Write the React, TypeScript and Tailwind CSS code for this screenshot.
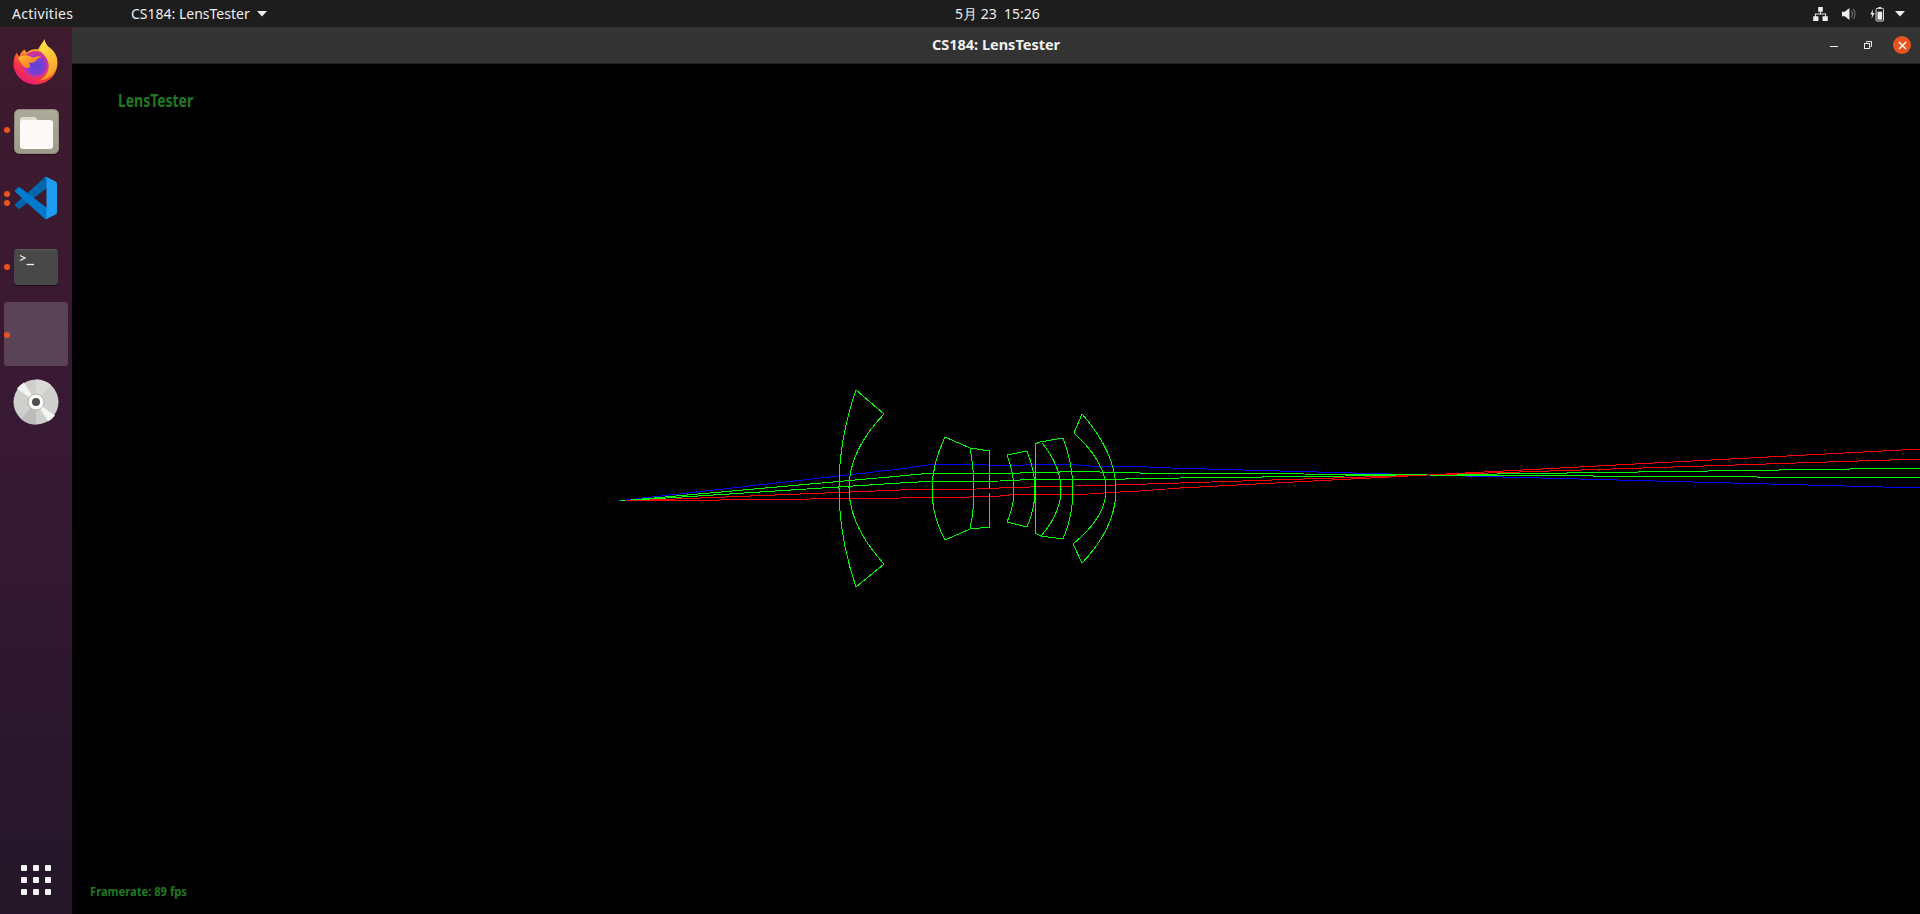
const UI = "font-['Noto_Sans','Open_Sans',sans-serif]";

function arc(a: [number, number], b: [number, number], c: [number, number]) {
  const cx = 2 * b[0] - (a[0] + c[0]) / 2;
  const cy = 2 * b[1] - (a[1] + c[1]) / 2;
  return `M${a[0]} ${a[1]}Q${cx} ${cy} ${c[0]} ${c[1]}`;
}

const lensPaths = [
  arc([856, 390], [839, 488], [856, 587]),
  arc([884, 414], [849, 488], [884, 564]),
  "M856 390L884 414M856 587L884 564",
  arc([945, 437], [932, 490], [945, 540]),
  arc([970, 448], [974, 490], [970, 529]),
  "M945 437L970 448M945 540L970 529",
  "M970 448L990 451M970 529L990 527",
  arc([990, 451], [989, 490], [990, 527]),
  "M1007 455L1027 451M1007 522L1027 527",
  arc([1007, 455], [1014, 490], [1007, 522]),
  arc([1027, 451], [1035, 490], [1027, 527]),
  "M1035 444L1035 533M1035 444L1040 442L1063 438M1035 533L1041 536L1063 539",
  arc([1063, 438], [1073, 490], [1063, 539]),
  arc([1042, 443], [1061, 490], [1041, 536]),
  arc([1082, 414], [1116, 490], [1082, 563]),
  arc([1074, 433], [1106, 490], [1073, 544]),
  "M1074 433L1082 414M1073 544L1082 563",
];

const rays: { color: string; pts: number[][] }[] = [
  {
    color: "#0000ff",
    pts: [[617, 501], [900, 469], [935, 464], [960, 464], [1000, 465.5], [1015, 466], [1030, 464.5], [1070, 464.5], [1090, 466], [1110, 467], [1125, 466], [1170, 468], [1427, 475], [1920, 488]],
  },
  {
    color: "#00ff00",
    pts: [[620, 501], [900, 476], [926, 473.5], [1020, 473], [1080, 471.5], [1140, 473], [1180, 473], [1427, 475], [1920, 478]],
  },
  {
    color: "#00ff00",
    pts: [[620, 501], [900, 483], [927, 481.5], [1000, 481], [1030, 479.5], [1125, 479], [1180, 478], [1427, 475], [1920, 468]],
  },
  {
    color: "#ff0000",
    pts: [[625, 501], [900, 490], [930, 489.5], [977, 489], [1010, 487.5], [1050, 486.5], [1100, 485.5], [1130, 484.5], [1180, 483], [1427, 475], [1920, 459]],
  },
  {
    color: "#ff0000",
    pts: [[630, 501], [900, 498], [940, 497], [970, 497], [1000, 496], [1015, 494.5], [1090, 494], [1110, 492.5], [1140, 491], [1180, 488], [1427, 475], [1920, 449]],
  },
];

function LensDiagram() {
  return (
    <svg className="absolute left-0 top-0" width="1848" height="850" viewBox="72 64 1848 850" shapeRendering="crispEdges" fill="none">
      {rays.map((r, i) => (
        <polyline key={i} points={r.pts.map((p) => p.join(",")).join(" ")} stroke={r.color} strokeWidth="1" />
      ))}
      {lensPaths.map((d, i) => (
        <path key={i} d={d} stroke="#00ff00" strokeWidth="1" />
      ))}
    </svg>
  );
}

function Firefox() {
  return (
    <svg width="48" height="48" viewBox="0 0 48 48">
      <defs>
        <linearGradient id="ff1" x1="0.8" y1="0.05" x2="0.25" y2="1">
          <stop offset="0" stopColor="#ffe23e" />
          <stop offset="0.4" stopColor="#ff9a24" />
          <stop offset="0.72" stopColor="#f5363f" />
          <stop offset="1" stopColor="#e8167e" />
        </linearGradient>
        <radialGradient id="ff2" cx="0.5" cy="0.55" r="0.6">
          <stop offset="0" stopColor="#5b45d6" />
          <stop offset="0.65" stopColor="#7a3fd2" />
          <stop offset="1" stopColor="#c0309a" />
        </radialGradient>
        <linearGradient id="ff3" x1="0" y1="0" x2="1" y2="0.7">
          <stop offset="0" stopColor="#ffc02e" />
          <stop offset="1" stopColor="#ff6a24" />
        </linearGradient>
        <linearGradient id="ff4" x1="0.3" y1="0" x2="0.6" y2="1">
          <stop offset="0" stopColor="#ffe648" />
          <stop offset="1" stopColor="#ff9a24" />
        </linearGradient>
      </defs>
      <path d="M32.5 1C33 6 35.5 8 38.5 10.5C42 13.5 45.5 18 45.5 24.5C45.5 37 35.5 46.5 23.5 46.5C11.5 46.5 1.5 37 1.5 25.5C1.5 21.5 2.5 17.5 5 14.5C5.5 16.5 6.5 18 7.5 18.5C8 16 10 12.5 12.5 11.5C13 12.5 14 14 15 14.5C19 10.5 23 11 26 11.5C29 6 32 3 32.5 1Z" fill="url(#ff1)" />
      <circle cx="23.5" cy="26.5" r="13.5" fill="#d0319a" />
      <circle cx="24" cy="27" r="10.5" fill="url(#ff2)" />
      <path d="M6 20C9.5 17 14.5 16.5 17.5 18C19 18.8 21 20 23 19C25 18 28 17.5 30 19.5C27 19 25.5 20.5 24.5 22C22.5 25 19.5 25 16.5 24.5C19.5 28 18 31.5 13.5 29.5C10 28 8.5 23.5 6 20Z" fill="url(#ff3)" />
      <path d="M32.5 1C33 6 35.5 8 38.5 10.5C42 13.5 45 18 45 24C45 33 38 41.5 27.5 42.5C35.5 38.5 38.5 31 36 23.5C34.5 19 31 15.5 27.5 12.5C29.5 7.5 32 3.5 32.5 1Z" fill="url(#ff4)" />
    </svg>
  );
}

function Files() {
  return (
    <div className="relative mt-[2px] h-[45px] w-[45px] rounded-[5px] border border-[#8d8a7b] bg-gradient-to-b from-[#aeaa99] to-[#a09c8b] shadow-[0_1px_1px_rgba(0,0,0,0.4)]">
      <div className="absolute left-[5px] top-[7px] h-[8px] w-[17px] rounded-t-[3px] bg-[#dedbd0]" />
      <div className="absolute left-[5px] top-[10px] h-[29px] w-[33px] rounded-[3px] bg-[#fbfaf8]" />
    </div>
  );
}

function VSCode() {
  return (
    <svg width="42" height="42" viewBox="0 0 100 100">
      <path d="M96.46 10.8L75.86.9c-2.39-1.15-5.24-.66-7.11 1.21L1.3 63.6c-1.81 1.65-1.81 4.5.01 6.15l5.51 5c1.49 1.35 3.72 1.45 5.32.24l81.2-61.6c2.72-2.07 6.64-.13 6.64 3.28v-.24c0-2.39-1.37-4.57-3.53-5.6Z" fill="#0065a9" />
      <path d="M96.46 89.2L75.86 99.1c-2.39 1.15-5.24.66-7.11-1.21L1.3 36.4c-1.81-1.65-1.81-4.5.01-6.15l5.51-5c1.49-1.35 3.72-1.45 5.32-.24l81.2 61.6c2.72 2.07 6.64.13 6.64-3.28v.24c0 2.39-1.37 4.57-3.53 5.6Z" fill="#007acc" />
      <path d="M75.86 99.13c-2.39 1.15-5.24.66-7.11-1.21 2.31 2.31 6.25.67 6.25-2.6V4.68c0-3.27-3.94-4.9-6.25-2.6 1.87-1.87 4.72-2.36 7.11-1.21l20.6 9.9c2.16 1.04 3.54 3.23 3.54 5.63v67.2c0 2.4-1.38 4.59-3.54 5.63Z" fill="#1f9cf0" />
    </svg>
  );
}

function Terminal() {
  return (
    <div className="relative mt-[1px] h-[36px] w-[44px] rounded-[4px] border-t border-[#5c5c5c] bg-[#484848] shadow-[0_1px_1px_rgba(0,0,0,0.5)]">
      <svg className="absolute left-[5px] top-[4px]" width="16" height="12" viewBox="0 0 16 12" fill="none" stroke="#eeeeee" strokeWidth="1.3">
        <path d="M1 1.5L6 4L1 6.5" />
        <path d="M7.5 10.5H15" />
      </svg>
    </div>
  );
}

function Disc() {
  return (
    <svg width="46" height="46" viewBox="0 0 46 46">
      <circle cx="23" cy="23" r="22.5" fill="#cfcfcd" />
      <path d="M23 23L4 9.5A23 23 0 0 1 11 3.5Z" fill="#f4f4f4" />
      <path d="M23 23L42 36.5A23 23 0 0 1 35 42.5Z" fill="#f4f4f4" />
      <path d="M23 23L23 .5A22.5 22.5 0 0 1 38 6Z" fill="#dadad8" />
      <path d="M23 23L23 45.5A22.5 22.5 0 0 1 8 40Z" fill="#bcbcba" />
      <circle cx="23" cy="23" r="8" fill="#fafafa" stroke="#b9b39c" strokeWidth="1" />
      <circle cx="23" cy="23" r="4" fill="#4e4e4e" />
    </svg>
  );
}

function Dot({ top }: { top: string }) {
  return <span className={`absolute left-[4px] h-[6px] w-[6px] rounded-full bg-[#e95420] ${top}`} />;
}

function DockItem({ children }: { children: React.ReactNode }) {
  return <div className="relative flex h-[68px] items-center justify-center">{children}</div>;
}

function TopBar() {
  return (
    <header className={`relative flex h-[27px] items-center bg-[#1d1d1d] text-[14px] text-[#eeeeee] ${UI}`}>
      <span className="ml-[12px] w-[119px] tracking-[0.3px]">Activities</span>
      <span>CS184: LensTester</span>
      <svg className="ml-[7px]" width="10" height="6" viewBox="0 0 10 6" fill="#eeeeee">
        <path d="M0 0H10L5 5.5Z" />
      </svg>
      <span className="absolute left-[955px] text-[14px]">5月 23&nbsp; 15:26</span>
      <div className="ml-auto mr-[15px] flex items-center">
        <svg width="15" height="14" viewBox="0 0 16 15" fill="#eeeeee">
          <path d="M5.5 0H10.5V5H8.5V7H14V10H15.8V15H10.2V10H13V8H3V10H5.8V15H.2V10H2V7H7.5V5H5.5Z" />
        </svg>
        <svg className="ml-[14px]" width="14" height="14" viewBox="0 0 15 14">
          <path d="M0 4.5H3L8 0.5V13.5L3 9.5H0Z" fill="#eeeeee" />
          <path d="M10 3.5C11.5 5.5 11.5 8.5 10 10.5M12 1.5C14.5 4.5 14.5 9.5 12 12.5" stroke="#8a8a8a" strokeWidth="1" fill="none" />
        </svg>
        <svg className="ml-[14px]" width="14" height="16" viewBox="0 0 15 16">
          <path d="M3 3L0.5 8.5H2.5L1.5 13L5 7H3Z" fill="#eeeeee" />
          <rect x="6.5" y="2" width="8" height="13.5" rx="1" fill="none" stroke="#eeeeee" />
          <rect x="9" y="0.5" width="3" height="1.5" fill="#eeeeee" />
          <rect x="8" y="5.5" width="5" height="8.5" fill="#eeeeee" />
        </svg>
        <svg className="ml-[11px]" width="10" height="6" viewBox="0 0 10 6" fill="#eeeeee">
          <path d="M0 0H10L5 5.5Z" />
        </svg>
      </div>
    </header>
  );
}

function TitleBar() {
  return (
    <div className={`relative flex h-[37px] items-center justify-center border-b border-[#222222] bg-[#333333] text-[14.5px] font-bold text-[#f0f0f0] ${UI}`}>
      <span>CS184: LensTester</span>
      <div className="absolute right-[9px] top-0 flex h-full items-center">
        <span className="mr-[26px] mt-[2px] h-[1px] w-[8px] bg-[#eeeeee]" />
        <svg className="mr-[21px]" width="8" height="8" viewBox="0 0 8 8" fill="none" stroke="#eeeeee" strokeWidth="1">
          <path d="M2.5 1.5V.5H7.5V5.5H6.5" />
          <rect x=".5" y="2.5" width="5" height="5" />
        </svg>
        <span className="flex h-[18px] w-[18px] items-center justify-center rounded-full bg-[#e95420]">
          <svg width="9" height="9" viewBox="0 0 9 9" stroke="#ffffff" strokeWidth="1.5">
            <path d="M1 1L8 8M8 1L1 8" />
          </svg>
        </span>
      </div>
    </div>
  );
}

const CONDENSED = "font-['Noto_Sans',sans-serif] font-bold text-[#1f7a1f]";

export default function App() {
  return (
    <div className="flex h-[914px] w-[1920px] flex-col overflow-hidden bg-black">
      <TopBar />
      <div className="flex min-h-0 flex-1">
        <aside className="flex w-[72px] flex-col bg-gradient-to-b from-[#3f1a2d] via-[#371934] to-[#241628] pt-px">
          <DockItem><Firefox /></DockItem>
          <DockItem><Dot top="top-[31px]" /><Files /></DockItem>
          <DockItem>
            <Dot top="top-[27px]" />
            <Dot top="top-[36px]" />
            <VSCode />
          </DockItem>
          <DockItem><Dot top="top-[32px]" /><Terminal /></DockItem>
          <DockItem>
            <Dot top="top-[32px]" />
            <div className="h-[64px] w-[64px] rounded-[3px] bg-[#5a4356]" />
          </DockItem>
          <DockItem><Disc /></DockItem>
          <div className="mt-auto mb-[19px] grid w-[30px] grid-cols-3 gap-[6px] self-center">
            {Array.from({ length: 9 }).map((_, i) => (
              <span key={i} className="h-[6px] w-[6px] rounded-[1px] bg-[#f2f2f2]" />
            ))}
          </div>
        </aside>
        <main className="flex min-w-0 flex-1 flex-col">
          <TitleBar />
          <div className="relative flex min-h-0 flex-1 flex-col justify-between bg-black pb-[15px] pl-[18px] pt-[25px]">
            <LensDiagram />
            <span className={`relative ml-[28px] origin-left scale-x-[0.82] text-[17px] leading-[24px] ${CONDENSED}`}>LensTester</span>
            <span className={`relative origin-left scale-x-[0.86] text-[13px] leading-[16px] ${CONDENSED}`}>Framerate: 89 fps</span>
          </div>
        </main>
      </div>
    </div>
  );
}
